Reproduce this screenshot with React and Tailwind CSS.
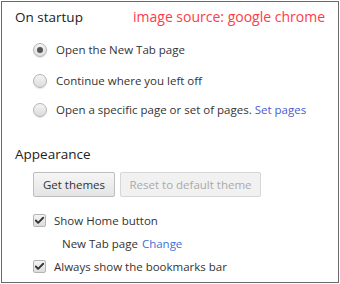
import { Check } from 'lucide-react';

const font = { fontFamily: '"Open Sans", "Noto Sans", sans-serif' };

function Radio({ checked, label, link, className }) {
  return (
    <div className={`flex items-center ${className}`}>
      <span className="w-[14px] h-[14px] rounded-full border border-[#b4b4b4] bg-gradient-to-b from-[#f4f4f4] to-[#dcdcdc] flex items-center justify-center shadow-[0_1px_1px_rgba(0,0,0,0.1)]">
        {checked && <span className="w-[6px] h-[6px] rounded-full bg-[#555]" />}
      </span>
      <span className="ml-[9px] text-[11.5px] text-[#333]">
        {label}
        {link && <span className="text-[#4a5ad0]"> {link}</span>}
      </span>
    </div>
  );
}

function Checkbox({ label }) {
  return (
    <div className="flex items-center h-[23px]">
      <span className="w-[13px] h-[13px] rounded-[2px] border border-[#b4b4b4] bg-gradient-to-b from-[#f4f4f4] to-[#dcdcdc] flex items-center justify-center">
        <Check className="w-[11px] h-[11px] text-[#333]" strokeWidth={4} />
      </span>
      <span className="ml-[8px] text-[11.5px] text-[#333]">{label}</span>
    </div>
  );
}

export default function App() {
  return (
    <div className="w-[340px] h-[284px] bg-white p-px" style={font}>
      <div className="w-[338px] h-[282px] border-[1.5px] border-[#6a6a6a] pl-[12px] pt-[4px]">
        <div className="flex items-baseline justify-between pr-[13px] h-[26px]">
          <h2 className="text-[13.5px] text-[#222] pl-[1px]">On startup</h2>
          <span className="text-[14px] text-[#ff3b47]">image source: google chrome</span>
        </div>
        <div className="pl-[19px] mt-[3px]">
          <Radio checked label="Open the New Tab page" className="h-[30px]" />
          <Radio label="Continue where you left off" className="h-[31px]" />
          <Radio label="Open a specific page or set of pages." link="Set pages" className="h-[28px]" />
        </div>
        <h2 className="text-[13.5px] text-[#222] mt-[20px] h-[24px] pl-[1px]">Appearance</h2>
        <div className="pl-[19px] flex gap-[5px] mt-[4px]">
          <button className="h-[25px] w-[82px] border border-[#bdbdbd] rounded-[2px] bg-gradient-to-b from-[#f6f6f6] to-[#e4e4e4] text-[11.5px] text-[#333]">
            Get themes
          </button>
          <button className="h-[25px] w-[141px] border border-[#d6d6d6] rounded-[2px] bg-[#f1f1f1] text-[11.5px] text-[#aaa]">
            Reset to default theme
          </button>
        </div>
        <div className="pl-[19px] mt-[12px]">
          <Checkbox label="Show Home button" />
          <div className="h-[23px] flex items-center pl-[29px] text-[11.5px] text-[#333]">
            New Tab page<span className="text-[#3a6fd8] ml-[4px]">Change</span>
          </div>
          <Checkbox label="Always show the bookmarks bar" />
        </div>
      </div>
    </div>
  );
}
